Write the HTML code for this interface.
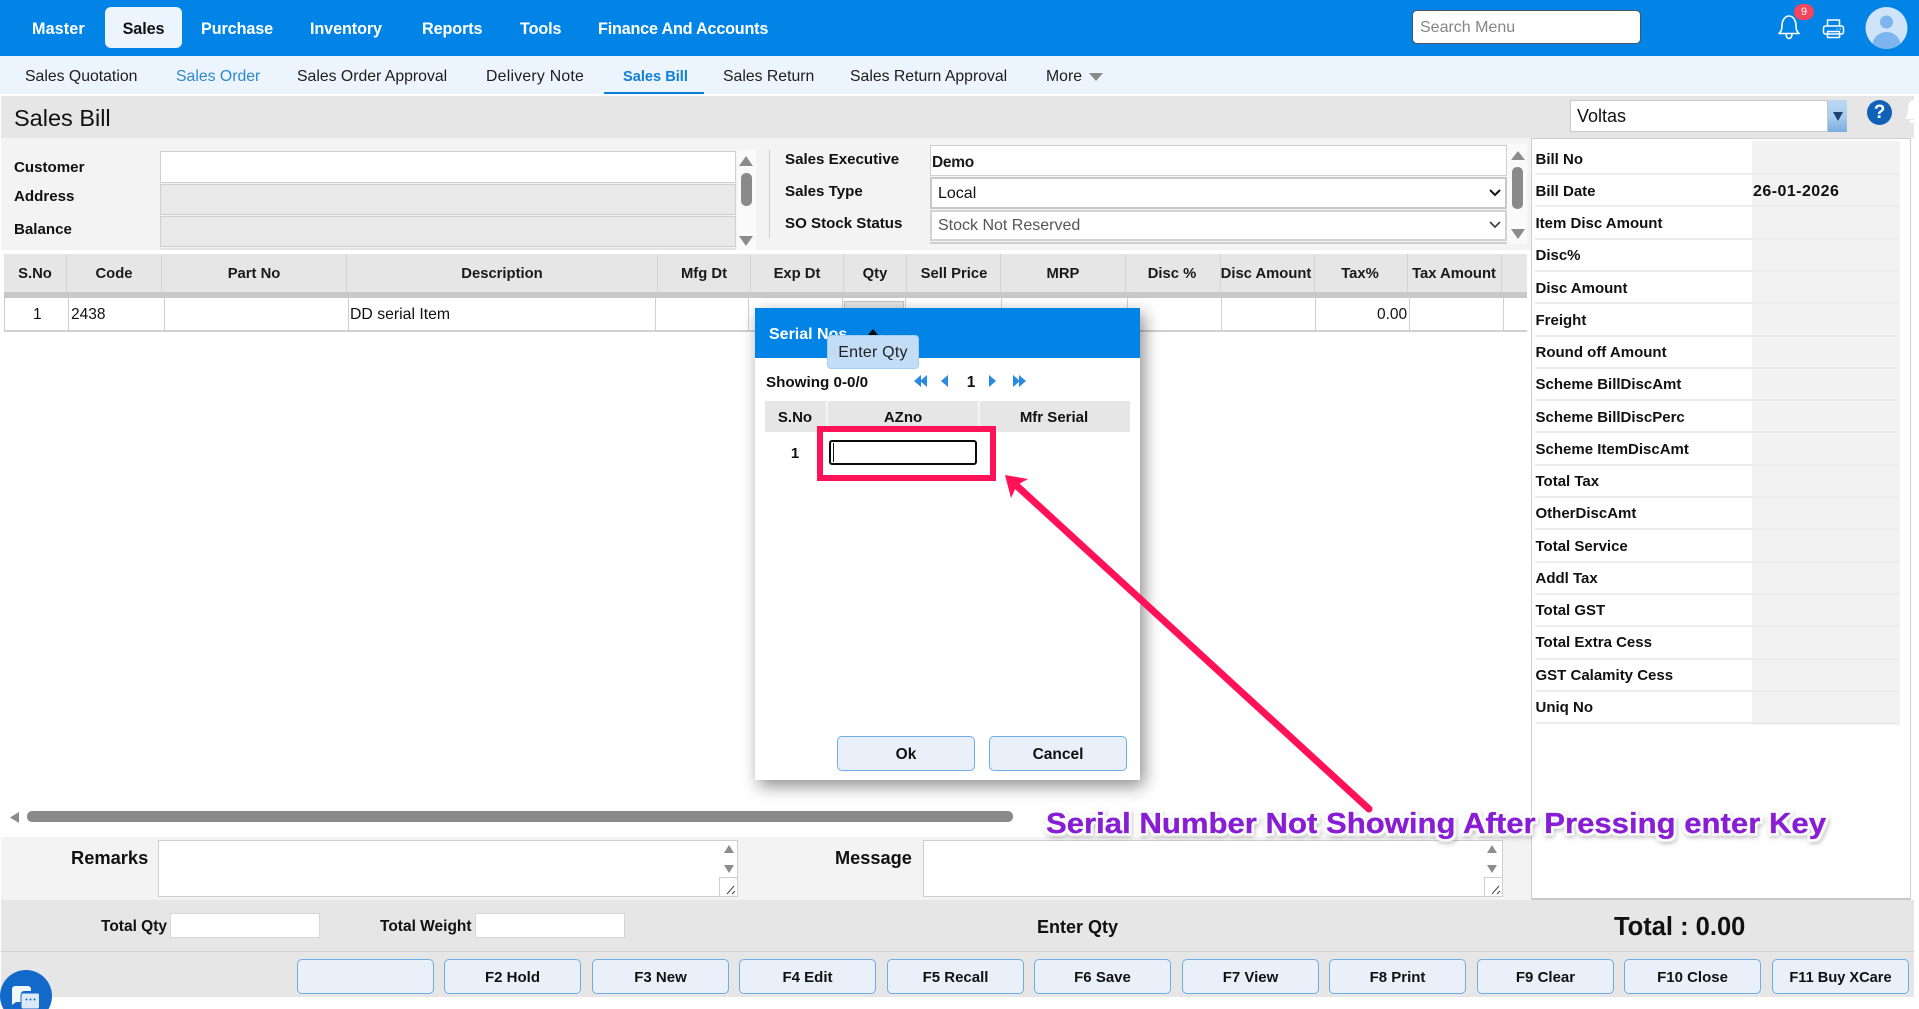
<!DOCTYPE html>
<html lang="en">
<head>
<meta charset="utf-8">
<title>Sales Bill</title>
<style>
html,body{margin:0;padding:0;background:#fff;}
body{position:relative;width:1919px;height:1009px;overflow:hidden;font-family:"Liberation Sans",sans-serif;color:#111;}
div,span{box-sizing:border-box;}
.a{position:absolute;}
.t{position:absolute;white-space:nowrap;line-height:20px;height:20px;transform:translateY(1px);}
.n{transform:none;}
.c{text-align:center;}
.b{font-weight:bold;}
.nav{font-size:16.2px;font-weight:bold;color:#fff;letter-spacing:-.1px;}
.sub{font-size:15.8px;color:#1c1c1c;top:66px;}
.h{font-size:14.8px;font-weight:bold;top:263px;width:140px;color:#1a1a1a;}
.lb{font-size:15.1px;font-weight:bold;color:#111;}
.sep{position:absolute;top:254px;width:1px;height:38px;background:#d4d4d4;}
.rsep{position:absolute;top:298px;width:1px;height:33px;background:#d0d0d0;}
.inp{position:absolute;background:#fff;border:2px solid #cfcfcf;}
.btn{position:absolute;top:959px;width:137px;height:35px;padding-top:2px;background:#e9f0fa;border:1px solid #6fade9;border-radius:5px;font-size:15px;font-weight:bold;display:flex;align-items:center;justify-content:center;color:#111;}
.rl{position:absolute;left:1535px;width:363px;height:2px;background:#ececec;}
.rt{position:absolute;left:1535.5px;white-space:nowrap;line-height:20px;font-size:15px;font-weight:bold;color:#111;transform:translateY(1px);}
</style>
</head>
<body>

<!-- Top bar -->
<div class="a" style="left:0;top:0;width:1919px;height:56px;background:#0284e6;"></div>
<div class="a" style="left:105px;top:7px;width:77px;height:41px;background:#ecf4fd;border-radius:6px;"></div>
<span class="t nav" style="left:32px;top:18px;letter-spacing:.1px;">Master</span>
<span class="t nav c" style="left:105px;top:18px;width:77px;color:#111;">Sales</span>
<span class="t nav" style="left:201px;top:18px;">Purchase</span>
<span class="t nav" style="left:310px;top:18px;">Inventory</span>
<span class="t nav" style="left:422px;top:18px;">Reports</span>
<span class="t nav" style="left:520px;top:18px;">Tools</span>
<span class="t nav" style="left:598px;top:18px;letter-spacing:-.2px;">Finance And Accounts</span>

<div class="a" style="left:1412px;top:10px;width:229px;height:34px;background:#fff;border:1px solid #4a5560;border-radius:5px;"></div>
<span class="t" style="left:1420px;top:17px;font-size:16px;color:#858585;">Search Menu</span>

<svg class="a" style="left:1776px;top:12px;" width="26" height="28" viewBox="0 0 26 28" fill="none" stroke="#fff" stroke-width="1.6" stroke-linejoin="round" stroke-linecap="round">
  <path d="M3 21.500c2-2 3-3.500 3-8 0-5 3-9.500 7-9.500s7 4.500 7 9.500c0 4.500 1 6 3 8z"/>
  <path d="M10 22c0 6 6 6 6 0"/>
</svg>
<div class="a" style="left:1794px;top:4px;width:20px;height:16px;border-radius:8px;background:#f4475f;color:#fff;font-size:11px;line-height:16px;text-align:center;">9</div>
<svg class="a" style="left:1822px;top:18px;" width="23" height="21" viewBox="0 0 23 21" fill="none" stroke="#fff" stroke-width="1.5" stroke-linejoin="round">
  <path d="M5.500 8V2h12v6"/>
  <rect x="1.500" y="8" width="20" height="8" rx="2"/>
  <path d="M5.500 13.500v6h12v-6z"/>
  <path d="M17.500 11h1.500M14.500 11h1" stroke-width="1"/>
</svg>
<svg class="a" style="left:1865px;top:7px;" width="43" height="42" viewBox="0 0 43 42">
  <defs><clipPath id="cp"><circle cx="21.500" cy="21" r="21"/></clipPath></defs>
  <circle cx="21.500" cy="21" r="21" fill="#cfe4f9"/>
  <g clip-path="url(#cp)" fill="#7db5ee">
    <circle cx="21.500" cy="15" r="6.500"/>
    <ellipse cx="21.500" cy="38" rx="14" ry="13"/>
  </g>
</svg>

<!-- Sub nav -->
<div class="a" style="left:0;top:56px;width:1919px;height:38px;background:#ecf4fd;"></div>
<span class="t sub" style="left:25px;">Sales Quotation</span>
<span class="t sub" style="left:176px;color:#2c89cc;">Sales Order</span>
<span class="t sub" style="left:297px;">Sales Order Approval</span>
<span class="t sub" style="left:486px;letter-spacing:.25px;">Delivery Note</span>
<span class="t sub b" style="left:623px;color:#0e80d6;font-size:14.6px;">Sales Bill</span>
<div class="a" style="left:604px;top:92px;width:100px;height:2px;background:#0b7fd8;"></div>
<span class="t sub" style="left:723px;">Sales Return</span>
<span class="t sub" style="left:850px;">Sales Return Approval</span>
<span class="t sub" style="left:1046px;">More</span>
<svg class="a" style="left:1089px;top:73px;" width="14" height="8"><path d="M0 0h14L7 8z" fill="#8a8a8a"/></svg>

<!-- Title band -->
<div class="a" style="left:1px;top:96px;width:1913px;height:42px;background:#e6e6e6;"></div>
<svg class="a" style="left:1905px;top:100px;" width="9" height="24"><path d="M9 0C5 0 3 4 3 9c0 5-1 8-3 10h9z" fill="#fff"/><rect x="5" y="20" width="4" height="3" fill="#fff"/></svg>
<span class="t" style="left:14px;top:107px;font-size:23.500px;color:#111;">Sales Bill</span>
<div class="a" style="left:1570px;top:100px;width:258px;height:32px;background:#fff;border:1px solid #c9c9c9;"></div>
<span class="t" style="left:1577px;top:105px;font-size:18px;color:#111;">Voltas</span>
<div class="a" style="left:1828px;top:100px;width:19px;height:32px;background:linear-gradient(#bcd8f2,#a9cdee 50%,#79aee0);"></div>
<svg class="a" style="left:1833px;top:112px;" width="10" height="9"><path d="M0 0h10L5 9z" fill="#1b3f6e"/></svg>
<div class="a" style="left:1867px;top:100px;width:25px;height:25px;border-radius:50%;background:#0f62b8;color:#fff;font-weight:bold;font-size:19px;line-height:25px;text-align:center;">?</div>

<!-- Form section -->
<div class="a" style="left:1px;top:138px;width:1530px;height:112px;background:#f3f3f3;"></div>
<div class="a" style="left:737px;top:150px;width:19px;height:100px;background:#fafafa;"></div>
<svg class="a" style="left:739px;top:156px;" width="14" height="10"><path d="M7 0l7 10H0z" fill="#8c8c8c"/></svg>
<div class="a" style="left:741px;top:173px;width:11px;height:33px;border-radius:5px;background:#8a8a8a;"></div>
<svg class="a" style="left:739px;top:236px;" width="14" height="10"><path d="M0 0h14L7 10z" fill="#8c8c8c"/></svg>

<div class="a" style="left:160px;top:151px;width:576px;height:32px;background:#fff;border:1px solid #cfcfcf;"></div>
<div class="a" style="left:160px;top:184px;width:576px;height:31px;background:#e9e9e9;border:1px solid #cfcfcf;"></div>
<div class="a" style="left:160px;top:216px;width:576px;height:31px;background:#e9e9e9;border:1px solid #cfcfcf;"></div>
<div class="a" style="left:160px;top:248px;width:576px;height:2px;background:#e3e3e3;"></div>
<span class="t lb" style="left:14px;top:157px;">Customer</span>
<span class="t lb" style="left:14px;top:186px;">Address</span>
<span class="t lb" style="left:14px;top:219px;">Balance</span>
<div class="a" style="left:769px;top:150px;width:1px;height:88px;background:#cfcfcf;"></div>

<span class="t lb" style="left:785px;top:149px;">Sales Executive</span>
<span class="t lb" style="left:785px;top:181px;">Sales Type</span>
<span class="t lb" style="left:785px;top:213px;">SO Stock Status</span>

<div class="a" style="left:930px;top:145px;width:577px;height:31px;background:#fff;border:1px solid #cfcfcf;"></div>
<span class="t" style="left:932px;top:152px;font-size:15.5px;font-weight:bold;color:#1a1a1a;letter-spacing:-.3px;">Demo</span>
<div class="inp" style="left:930px;top:177px;width:577px;height:32px;border-width:2px;border-color:#c8c8c8;"></div>
<span class="t" style="left:938px;top:183px;font-size:16px;">Local</span>
<svg class="a" style="left:1489px;top:189px;" width="12" height="8" fill="none" stroke="#111" stroke-width="2"><path d="M1 1l5 5 5-5"/></svg>
<div class="inp" style="left:930px;top:210px;width:577px;height:31px;border-color:#d2d2d2;"></div>
<span class="t" style="left:938px;top:215px;font-size:16px;color:#555;">Stock Not Reserved</span>
<svg class="a" style="left:1489px;top:221px;" width="12" height="8" fill="none" stroke="#3c4a44" stroke-width="1.800"><path d="M1 1l5 5 5-5"/></svg>
<div class="a" style="left:930px;top:242px;width:577px;height:2px;background:#cfcfcf;"></div>

<div class="a" style="left:1507px;top:144px;width:20px;height:100px;background:#fafafa;"></div>
<svg class="a" style="left:1511px;top:151px;" width="14" height="9"><path d="M7 0l7 9H0z" fill="#8c8c8c"/></svg>
<div class="a" style="left:1512px;top:167px;width:11px;height:42px;border-radius:5px;background:#8a8a8a;"></div>
<svg class="a" style="left:1511px;top:229px;" width="14" height="10"><path d="M0 0h14L7 10z" fill="#8c8c8c"/></svg>

<!-- Grid header -->
<div class="a" style="left:4px;top:254px;width:1523px;height:38px;background:#e6e6e6;"></div>
<div class="a" style="left:4px;top:292px;width:1523px;height:6px;background:#c8c8c8;"></div>
<div class="sep" style="left:66px"></div><div class="sep" style="left:161px"></div><div class="sep" style="left:346px"></div><div class="sep" style="left:657px"></div><div class="sep" style="left:750px"></div><div class="sep" style="left:843px"></div><div class="sep" style="left:906px"></div><div class="sep" style="left:1000px"></div><div class="sep" style="left:1125px"></div><div class="sep" style="left:1220px"></div><div class="sep" style="left:1314px"></div><div class="sep" style="left:1407px"></div><div class="sep" style="left:1501px"></div>
<span class="t h c" style="left:-35px;">S.No</span>
<span class="t h c" style="left:44px;">Code</span>
<span class="t h c" style="left:184px;">Part No</span>
<span class="t h c" style="left:432px;">Description</span>
<span class="t h c" style="left:634px;">Mfg Dt</span>
<span class="t h c" style="left:727px;">Exp Dt</span>
<span class="t h c" style="left:805px;">Qty</span>
<span class="t h c" style="left:884px;">Sell Price</span>
<span class="t h c" style="left:993px;">MRP</span>
<span class="t h c" style="left:1102px;">Disc %</span>
<span class="t h c" style="left:1196px;">Disc Amount</span>
<span class="t h c" style="left:1290px;">Tax%</span>
<span class="t h c" style="left:1384px;">Tax Amount</span>

<!-- Grid row -->
<div class="a" style="left:4px;top:298px;width:1px;height:33px;background:#d0d0d0;"></div>
<div class="rsep" style="left:68px"></div><div class="rsep" style="left:164px"></div><div class="rsep" style="left:348px"></div><div class="rsep" style="left:655px"></div><div class="rsep" style="left:748px"></div><div class="rsep" style="left:842px"></div><div class="rsep" style="left:905px"></div><div class="rsep" style="left:1001px"></div><div class="rsep" style="left:1127px"></div><div class="rsep" style="left:1221px"></div><div class="rsep" style="left:1315px"></div><div class="rsep" style="left:1409px"></div><div class="rsep" style="left:1503px"></div>
<div class="a" style="left:4px;top:330px;width:1523px;height:2px;background:#d0d0d0;"></div>
<div class="a" style="left:844px;top:301px;width:60px;height:12px;background:#e6e6e6;border:1px solid #c4c4c4;"></div>
<span class="t n" style="left:33px;top:305px;font-size:15.5px;">1</span>
<span class="t n" style="left:71px;top:305px;font-size:15.5px;">2438</span>
<span class="t n" style="left:350px;top:305px;font-size:15.8px;">DD serial Item</span>
<span class="t n" style="left:1377px;top:305px;font-size:15.5px;">0.00</span>

<!-- Right panel -->
<div class="a" style="left:1531px;top:138px;width:380px;height:762px;background:#fff;border:1px solid #cfcfcf;border-bottom:2px solid #c8c8c8;"></div>
<div class="a" style="left:1752px;top:141px;width:148px;height:584px;background:#f2f2f2;"></div>
<div class="rl" style="top:173px"></div><div class="rl" style="top:205px"></div><div class="rl" style="top:238px"></div><div class="rl" style="top:270px"></div><div class="rl" style="top:302px"></div><div class="rl" style="top:335px"></div><div class="rl" style="top:367px"></div><div class="rl" style="top:399px"></div><div class="rl" style="top:431px"></div><div class="rl" style="top:464px"></div><div class="rl" style="top:496px"></div><div class="rl" style="top:528px"></div><div class="rl" style="top:561px"></div><div class="rl" style="top:593px"></div><div class="rl" style="top:625px"></div><div class="rl" style="top:658px"></div><div class="rl" style="top:690px"></div><div class="rl" style="top:722px"></div>
<span class="rt" style="top:149px">Bill No</span>
<span class="rt" style="top:181px">Bill Date</span>
<span class="a b" style="left:1753px;top:182px;font-size:16px;line-height:20px;letter-spacing:.45px;">26-01-2026</span>
<span class="rt" style="top:213px">Item Disc Amount</span>
<span class="rt" style="top:245px">Disc%</span>
<span class="rt" style="top:278px">Disc Amount</span>
<span class="rt" style="top:310px">Freight</span>
<span class="rt" style="top:342px">Round off Amount</span>
<span class="rt" style="top:374px">Scheme BillDiscAmt</span>
<span class="rt" style="top:407px">Scheme BillDiscPerc</span>
<span class="rt" style="top:439px">Scheme ItemDiscAmt</span>
<span class="rt" style="top:471px">Total Tax</span>
<span class="rt" style="top:503px">OtherDiscAmt</span>
<span class="rt" style="top:536px">Total Service</span>
<span class="rt" style="top:568px">Addl Tax</span>
<span class="rt" style="top:600px">Total GST</span>
<span class="rt" style="top:632px">Total Extra Cess</span>
<span class="rt" style="top:665px">GST Calamity Cess</span>
<span class="rt" style="top:697px">Uniq No</span>

<!-- Horizontal scrollbar -->
<svg class="a" style="left:10px;top:812px;" width="9" height="11"><path d="M9 0v11L0 5.500z" fill="#8a8a8a"/></svg>
<div class="a" style="left:27px;top:811px;width:986px;height:11px;border-radius:5px;background:#8a8a8a;"></div>

<!-- Remarks -->
<div class="a" style="left:1px;top:837px;width:1530px;height:63px;background:#f3f3f3;"></div>
<span class="t n b" style="left:71px;top:848px;font-size:18.3px;">Remarks</span>
<div class="a" style="left:158px;top:840px;width:580px;height:57px;background:#fff;border:1px solid #cfcfcf;"></div>
<svg class="a" style="left:723px;top:845px;" width="12" height="28" fill="#8c8c8c"><path d="M6 0l5 8H1zM1 20h10l-5 8z"/></svg>
<div class="a" style="left:719px;top:877px;width:19px;height:20px;background:#fff;border:1px solid #cfcfcf;"></div>
<svg class="a" style="left:726px;top:885px;" width="10" height="10" fill="none" stroke="#444" stroke-width="1"><path d="M1 9l7-8M6 9l3-3"/></svg>
<span class="t n b" style="left:835px;top:848px;font-size:18.2px;">Message</span>
<div class="a" style="left:923px;top:840px;width:580px;height:57px;background:#fff;border:1px solid #cfcfcf;"></div>
<svg class="a" style="left:1486px;top:845px;" width="12" height="28" fill="#8c8c8c"><path d="M6 0l5 8H1zM1 20h10l-5 8z"/></svg>
<div class="a" style="left:1484px;top:877px;width:19px;height:20px;background:#fff;border:1px solid #cfcfcf;"></div>
<svg class="a" style="left:1491px;top:885px;" width="10" height="10" fill="none" stroke="#444" stroke-width="1"><path d="M1 9l7-8M6 9l3-3"/></svg>

<!-- Bottom band -->
<div class="a" style="left:1px;top:900px;width:1913px;height:97px;background:#e6e6e6;"></div>
<div class="a" style="left:1px;top:951px;width:1913px;height:1px;background:#d2d2d2;"></div>
<span class="t n lb" style="left:101px;top:917px;font-size:15.5px;">Total Qty</span>
<div class="a" style="left:170px;top:913px;width:150px;height:25px;background:#fff;border:1px solid #d6d6d6;"></div>
<span class="t n lb" style="left:380px;top:917px;font-size:15.5px;">Total Weight</span>
<div class="a" style="left:475px;top:913px;width:150px;height:25px;background:#fff;border:1px solid #d6d6d6;"></div>
<span class="t n b" style="left:1037px;top:917px;font-size:18px;">Enter Qty</span>
<span class="t n b" style="left:1614px;top:917px;font-size:25.500px;">Total : 0.00</span>

<div class="btn" style="left:297px;"></div>
<div class="btn" style="left:444px;">F2 Hold</div>
<div class="btn" style="left:592px;">F3 New</div>
<div class="btn" style="left:739px;">F4 Edit</div>
<div class="btn" style="left:887px;">F5 Recall</div>
<div class="btn" style="left:1034px;">F6 Save</div>
<div class="btn" style="left:1182px;">F7 View</div>
<div class="btn" style="left:1329px;">F8 Print</div>
<div class="btn" style="left:1477px;">F9 Clear</div>
<div class="btn" style="left:1624px;">F10 Close</div>
<div class="btn" style="left:1772px;font-size:14.6px;">F11 Buy XCare</div>

<!-- Chat bubble -->
<svg class="a" style="left:0;top:969px;" width="54" height="40" viewBox="0 0 54 40">
  <circle cx="26" cy="27" r="26" fill="#1369c9"/>
  <path d="M12 20a3 3 0 0 1 3-3h13a3 3 0 0 1 3 3v2H24a3 3 0 0 0-3 3v8h-5l-4 3z" fill="#f2f7fd"/>
  <rect x="21" y="24" width="18.500" height="16" rx="2" fill="#dbe9f8" stroke="#1369c9"/>
  <circle cx="26.500" cy="30.500" r="1" fill="#1369c9"/><circle cx="30.500" cy="30.500" r="1" fill="#1369c9"/><circle cx="34.500" cy="30.500" r="1" fill="#1369c9"/>
</svg>

<!-- Modal -->
<div class="a" style="left:755px;top:308px;width:385px;height:472px;background:#fff;box-shadow:4px 6px 16px rgba(0,0,0,.45);"></div>
<div class="a" style="left:755px;top:308px;width:385px;height:50px;background:#0284e6;"></div>
<span class="t b" style="left:769px;top:324px;font-size:16px;color:#fff;">Serial Nos</span>
<svg class="a" style="left:867px;top:329px;" width="12" height="7"><path d="M6 0l6 7H0z" fill="#0a0a0a"/></svg>
<div class="a" style="left:827px;top:335px;width:92px;height:34px;background:#c3ddf7;border:1px dotted #86bcee;border-radius:4px;text-align:center;font-size:16px;line-height:34px;color:#222;letter-spacing:.2px;">Enter Qty</div>

<span class="t b" style="left:766px;top:372px;font-size:15.2px;color:#111;">Showing 0-0/0</span>
<svg class="a" style="left:914px;top:375px;" width="112" height="13" fill="#2a8ae0">
  <path d="M7 0v12L0 6zM13 0v12L6 6zM34 0v12L27 6zM75 0l7 6-7 6zM99 0l7 6-7 6zM105 0l7 6-7 6z"/>
</svg>
<span class="t b c" style="left:961px;top:372px;width:20px;font-size:15.5px;">1</span>

<div class="a" style="left:765px;top:401px;width:365px;height:31px;background:#e6e6e6;"></div>
<div class="a" style="left:826px;top:401px;width:2px;height:31px;background:#f5f5f5;"></div>
<div class="a" style="left:978px;top:401px;width:2px;height:31px;background:#f5f5f5;"></div>
<span class="t b c" style="left:765px;top:407px;width:60px;font-size:15px;">S.No</span>
<span class="t b c" style="left:828px;top:407px;width:150px;font-size:15px;">AZno</span>
<span class="t b c" style="left:979px;top:407px;width:150px;font-size:15px;">Mfr Serial</span>
<span class="t b c" style="left:765px;top:443px;width:60px;font-size:15px;">1</span>
<div class="a" style="left:829px;top:440px;width:148px;height:25px;background:#fff;border:2px solid #0b0b0b;border-radius:3px;"></div>
<div class="a" style="left:833px;top:443px;width:1px;height:19px;background:#111;"></div>

<div class="a" style="left:837px;top:736px;width:138px;height:35px;padding-top:2px;background:#e9f0fa;border:1px solid #6fade9;border-radius:5px;font-size:15.5px;font-weight:bold;display:flex;align-items:center;justify-content:center;">Ok</div>
<div class="a" style="left:989px;top:736px;width:138px;height:35px;padding-top:2px;background:#e9f0fa;border:1px solid #6fade9;border-radius:5px;font-size:15.5px;font-weight:bold;display:flex;align-items:center;justify-content:center;">Cancel</div>

<!-- Annotation -->
<div class="a" style="left:817px;top:426px;width:179px;height:55px;border:6px solid #ff1257;"></div>
<svg class="a" style="left:0;top:0;pointer-events:none;" width="1919" height="1009" viewBox="0 0 1919 1009">
  <defs>
    <filter id="sh" x="-3%" y="-60%" width="106%" height="220%">
      <feMorphology in="SourceAlpha" operator="dilate" radius="2.2" result="d"/>
      <feGaussianBlur in="d" stdDeviation=".5" result="db"/>
      <feFlood flood-color="#fff"/><feComposite in2="db" operator="in" result="w"/>
      <feGaussianBlur in="d" stdDeviation="2.500" result="sb"/>
      <feOffset in="sb" dx="1" dy="2" result="so"/>
      <feFlood flood-color="#000" flood-opacity=".3"/><feComposite in2="so" operator="in" result="s"/>
      <feMerge><feMergeNode in="s"/><feMergeNode in="w"/><feMergeNode in="SourceGraphic"/></feMerge>
    </filter>
  </defs>
  <line x1="1369" y1="809" x2="1017" y2="486" stroke="#ff1257" stroke-width="7" stroke-linecap="round"/>
  <path d="M1005 475l23 4-11 6-6 13z" fill="#ff1257"/>
  <text x="1046" y="833" font-family="Liberation Sans, sans-serif" font-weight="bold" font-size="29" fill="#8a1fd6" stroke="#8a1fd6" stroke-width=".5" textLength="780" lengthAdjust="spacingAndGlyphs" filter="url(#sh)">Serial Number Not Showing After Pressing enter Key</text>
</svg>

</body>
</html>
